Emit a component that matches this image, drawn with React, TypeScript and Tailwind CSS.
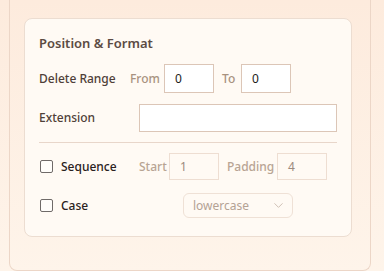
import { ChevronDown } from "lucide-react";

// Rename tool panel: "Position & Format" options card

const font = { fontFamily: '"Noto Sans", "Open Sans", sans-serif' };

function Checkbox() {
  return <span className="h-[13px] w-[13px] shrink-0 rounded-[2px] border border-[#6f6a68] bg-[#fffdfa]" />;
}

export default function App() {
  return (
    <div
      style={font}
      className="h-[271px] w-[384px] overflow-hidden bg-gradient-to-b from-[#fdebdd] to-[#fef4ea]"
    >
      <div className="ml-[9px] mr-[13px] h-[271px] rounded-b-lg border-x border-b border-[#ecd6c7] px-[14px] pt-[18px]">
        {/* Card */}
        <div className="w-[328px] rounded-lg border border-[#ecddd1] bg-[#fffaf4] px-[14px] pt-[14px] pb-[18px]">
          <h2 className="h-[20px] text-[13px] font-semibold leading-[20px] text-[#5c4b43]">
            Position &amp; Format
          </h2>

          {/* Delete range */}
          <div className="mt-[11px] flex h-[29px] items-center text-[12px]">
            <span className="w-[91px] font-medium text-[#4f3f38]">Delete Range</span>
            <span className="w-[34px] font-medium text-[#a8927f]">From</span>
            <div className="flex h-[29px] w-[50px] items-center border border-[#dcc6b7] bg-white px-[10px] text-[12px] text-[#1d1a19]">
              0
            </div>
            <span className="w-[27px] pl-[8px] font-medium text-[#a8927f]">To</span>
            <div className="flex h-[29px] w-[50px] items-center border border-[#dcc6b7] bg-white px-[10px] text-[12px] text-[#1d1a19]">
              0
            </div>
          </div>

          {/* Extension */}
          <div className="mt-[11px] flex h-[28px] items-center text-[12px]">
            <span className="w-[100px] font-medium text-[#4f3f38]">Extension</span>
            <div className="h-[28px] flex-1 border border-[#dcc6b7] bg-white" />
          </div>

          <div className="mt-[10px] h-px bg-[#e8d6ca]" />

          {/* Sequence */}
          <div className="mt-[10px] flex h-[27px] items-center text-[12px]">
            <div className="flex w-[100px] items-center gap-[8px] pl-px">
              <Checkbox />
              <span className="font-medium text-[#2a2120]">Sequence</span>
            </div>
            <span className="w-[30px] font-medium text-[#b8a493]">Start</span>
            <div className="flex h-[27px] w-[50px] items-center border border-[#eeded2] px-[10px] text-[12px] text-[#9c8a7e]">
              1
            </div>
            <span className="w-[58px] pl-[8px] font-medium text-[#b8a493]">Padding</span>
            <div className="flex h-[27px] w-[50px] items-center border border-[#eeded2] px-[10px] text-[12px] text-[#9c8a7e]">
              4
            </div>
          </div>

          {/* Case */}
          <div className="mt-[13px] flex h-[25px] items-center text-[12px]">
            <div className="flex w-[144px] items-center gap-[8px] pl-px">
              <Checkbox />
              <span className="font-medium text-[#2a2120]">Case</span>
            </div>
            <div className="flex h-[25px] w-[110px] items-center justify-between rounded-md border border-[#efe1d6] pl-[9px] pr-[6px] text-[12px] text-[#b4a294]">
              <span>lowercase</span>
              <ChevronDown size={15} strokeWidth={1.5} className="text-[#cbbcb0]" />
            </div>
          </div>
        </div>
      </div>
    </div>
  );
}
